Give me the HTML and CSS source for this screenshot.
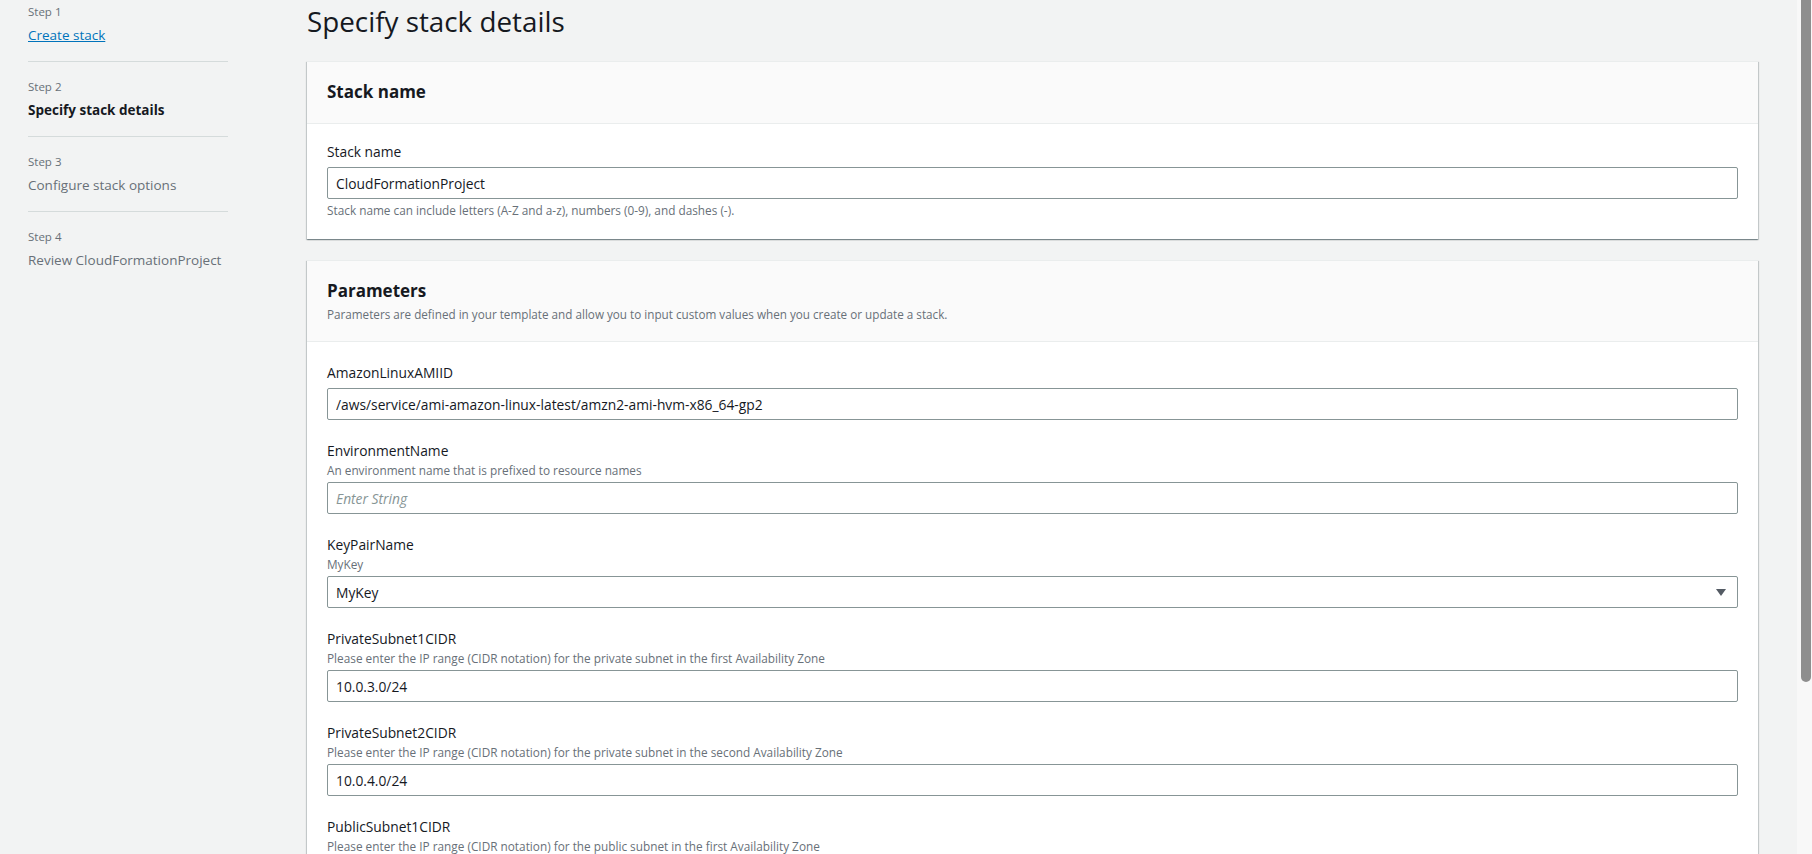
FILE: index.html
```html
<!DOCTYPE html>
<html lang="en">
<head>
<meta charset="utf-8">
<title>Specify stack details</title>
<link rel="stylesheet" href="styles.css">
</head>
<body>
<div class="layout">
  <nav class="wizard-nav">
    <div class="step">
      <div class="step-num">Step 1</div>
      <a class="step-title link" href="#">Create stack</a>
    </div>
    <div class="step">
      <div class="step-num">Step 2</div>
      <div class="step-title active">Specify stack details</div>
    </div>
    <div class="step">
      <div class="step-num">Step 3</div>
      <div class="step-title">Configure stack options</div>
    </div>
    <div class="step last">
      <div class="step-num">Step 4</div>
      <div class="step-title">Review CloudFormationProject</div>
    </div>
  </nav>

  <main class="main">
    <h1 class="page-title">Specify stack details</h1>

    <section class="card">
      <header class="card-header">
        <h2 class="card-title">Stack name</h2>
      </header>
      <div class="card-body card-body-tight">
        <div class="field">
          <label class="field-label">Stack name</label>
          <input class="control" type="text" value="CloudFormationProject">
          <div class="field-help">Stack name can include letters (A-Z and a-z), numbers (0-9), and dashes (-).</div>
        </div>
      </div>
    </section>

    <section class="card">
      <header class="card-header card-header-desc">
        <h2 class="card-title">Parameters</h2>
        <p class="card-desc">Parameters are defined in your template and allow you to input custom values when you create or update a stack.</p>
      </header>
      <div class="card-body fields">
        <div class="field">
          <label class="field-label">AmazonLinuxAMIID</label>
          <input class="control" type="text" value="/aws/service/ami-amazon-linux-latest/amzn2-ami-hvm-x86_64-gp2">
        </div>
        <div class="field">
          <label class="field-label">EnvironmentName</label>
          <div class="field-desc">An environment name that is prefixed to resource names</div>
          <input class="control" type="text" placeholder="Enter String">
        </div>
        <div class="field">
          <label class="field-label">KeyPairName</label>
          <div class="field-desc">MyKey</div>
          <div class="control select">
            <span>MyKey</span>
            <svg class="caret" width="10" height="7" viewBox="0 0 10 7"><polygon points="0,0 10,0 5,7" fill="#545b64"/></svg>
          </div>
        </div>
        <div class="field">
          <label class="field-label">PrivateSubnet1CIDR</label>
          <div class="field-desc">Please enter the IP range (CIDR notation) for the private subnet in the first Availability Zone</div>
          <input class="control" type="text" value="10.0.3.0/24">
        </div>
        <div class="field">
          <label class="field-label">PrivateSubnet2CIDR</label>
          <div class="field-desc">Please enter the IP range (CIDR notation) for the private subnet in the second Availability Zone</div>
          <input class="control" type="text" value="10.0.4.0/24">
        </div>
        <div class="field">
          <label class="field-label">PublicSubnet1CIDR</label>
          <div class="field-desc">Please enter the IP range (CIDR notation) for the public subnet in the first Availability Zone</div>
          <input class="control" type="text" value="10.0.1.0/24">
        </div>
      </div>
    </section>
  </main>

  <div class="scrollbar"><div class="thumb"></div></div>
</div>
</body>
</html>
```

FILE: styles.css
```css
* { box-sizing: border-box; }
html, body {
  margin: 0;
  height: 854px;
  overflow: hidden;
}
body {
  background: #f2f3f3;
  font-family: "Open Sans", "Noto Sans", sans-serif;
  color: #16191f;
  font-size: 13.5px;
}
.layout {
  display: grid;
  grid-template-columns: 228px 1fr 15px;
  height: 854px;
}

/* Sidebar */
.wizard-nav {
  padding: 4px 0 0 28px;
}
.step {
  padding: 0 0 16px;
  border-bottom: 1px solid #d5dbdb;
  margin-bottom: 17px;
}
.step.last { border-bottom: none; }
.step-num {
  font-size: 11.5px;
  line-height: 16px;
  color: #687078;
}
.step-title {
  display: block;
  margin-top: 5px;
  font-size: 13.5px;
  line-height: 20px;
  color: #687078;
}
.step-title.link {
  color: #0073bb;
  text-decoration: underline;
}
.step-title.active {
  color: #16191f;
  font-weight: 700;
}

/* Main */
.main {
  padding: 3px 39px 0 79px;
  display: flex;
  flex-direction: column;
  gap: 21px;
  min-width: 0;
}
.page-title {
  margin: 0 0 1px;
  font-size: 27.8px;
  line-height: 36px;
  font-weight: 400;
  color: #16191f;
}
.card {
  background: #fff;
  box-shadow: 0 1px 1px 0 rgba(0,28,36,.3), 1px 1px 1px 0 rgba(0,28,36,.15), -1px 1px 1px 0 rgba(0,28,36,.15);
  border-top: 1px solid #eaeded;
}
.card-header {
  background: #fafafa;
  border-bottom: 1px solid #eaeded;
  padding: 19px 20px 20px;
}
.card-header-desc {
  padding-bottom: 19px;
}
.card-title {
  margin: 0;
  font-size: 17px;
  line-height: 22px;
  font-weight: 700;
}
.card-desc {
  margin: 4px 0 0;
  font-size: 11.7px;
  line-height: 16px;
  color: #687078;
}
.card-body {
  padding: 20px 20px 20px;
}
.card-body-tight {
  padding-top: 17px;
  padding-bottom: 21px;
}
.fields {
  display: flex;
  flex-direction: column;
  gap: 20px;
}
.field {
  display: flex;
  flex-direction: column;
}
.field-label {
  font-size: 13.8px;
  line-height: 22px;
  color: #16191f;
}
.field-desc {
  font-size: 11.8px;
  line-height: 16px;
  color: #687078;
}
.field-help {
  margin-top: 3px;
  font-size: 11.8px;
  line-height: 16px;
  color: #687078;
}
.control {
  margin-top: 4px;
  height: 32px;
  width: 100%;
  border: 1px solid #879596;
  border-radius: 2px;
  background: #fff;
  padding: 0 8px;
  font-family: "Open Sans", "Noto Sans", sans-serif;
  font-size: 13.8px;
  color: #16191f;
  outline: none;
}
.control::placeholder {
  color: #879596;
  font-style: italic;
}
.select {
  display: flex;
  align-items: center;
  justify-content: space-between;
  padding-right: 11px;
}

/* Scrollbar */
.scrollbar {
  background: #f8f8f8;
  padding: 0 1px 0 4px;
}
.thumb {
  height: 682px;
  background: #8e8e8e;
  border-radius: 0 0 5px 5px;
}
```
